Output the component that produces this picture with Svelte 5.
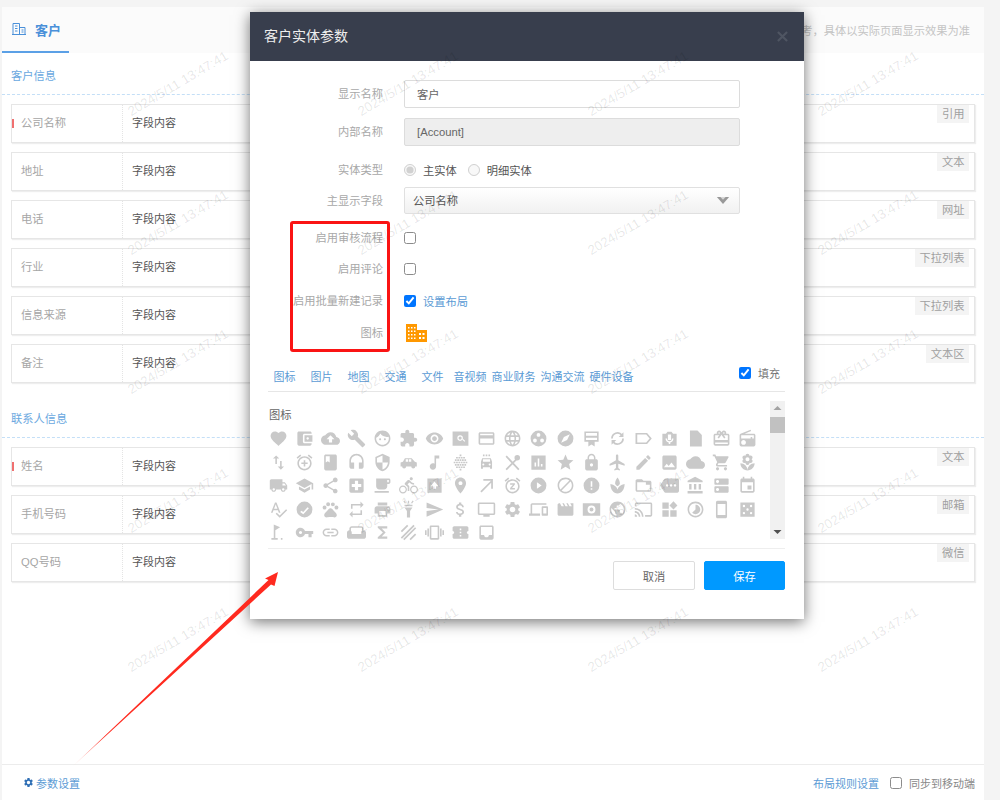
<script>
  const c = (x, y, r) => `M${x - r} ${y}a${r} ${r} 0 1 0 ${2 * r} 0a${r} ${r} 0 1 0 ${-2 * r} 0z`;
  const r = (x, y, w, h) => `M${x} ${y}h${w}v${h}h${-w}z`;

  // staggered dots, widest in the middle row
  const lattice = () => {
    let out = "";
    for (let row = 0; row < 7; row++) {
      const y = 3 + row * 3;
      const odd = row % 2 === 1;
      for (let x = odd ? 4.5 : 3; x <= 21; x += 3) {
        if (Math.abs(x - 12) + Math.abs(y - 12) <= 11) out += r(x - 1.1, y - 1.1, 2.2, 2.2);
      }
    }
    return out;
  };

  const alarm = "M7.88 3.39L6.6 1.86 2 5.71l1.29 1.53 4.59-3.85zM22 5.72l-4.6-3.86-1.29 1.53 4.6 3.86L22 5.72zM12 4c-4.97 0-9 4.03-9 9s4.02 9 9 9c4.97 0 9-4.03 9-9s-4.03-9-9-9zm0 16c-3.87 0-7-3.13-7-7s3.13-7 7-7 7 3.13 7 7-3.13 7-7 7z";
  const gear = "M19.14 12.94c.04-.3.06-.61.06-.94 0-.32-.02-.64-.07-.94l2.03-1.58c.18-.14.23-.41.12-.61l-1.92-3.32c-.12-.22-.37-.29-.59-.22l-2.39.96c-.5-.38-1.03-.7-1.62-.94L14.4 2.81c-.04-.24-.24-.41-.48-.41h-3.84c-.24 0-.43.17-.47.41L9.25 5.35C8.66 5.59 8.12 5.92 7.63 6.29L5.24 5.33c-.22-.08-.47 0-.59.22L2.74 8.87C2.62 9.08 2.66 9.34 2.86 9.48l2.03 1.58C4.84 11.36 4.8 11.69 4.8 12s.02.64.07.94l-2.03 1.58c-.18.14-.23.41-.12.61l1.92 3.32c.12.22.37.29.59.22l2.39-.96c.5.38 1.03.7 1.62.94l.36 2.54c.05.24.24.41.48.41h3.84c.24 0 .44-.17.47-.41l.36-2.54c.59-.24 1.13-.56 1.62-.94l2.39.96c.22.08.47 0 .59-.22l1.92-3.32c.12-.22.07-.47-.12-.61l-2.01-1.58zM12 15.6c-1.98 0-3.6-1.62-3.6-3.6s1.62-3.6 3.6-3.6 3.6 1.62 3.6 3.6-1.62 3.6-3.6 3.6z";
  const cloud = "M19.35 10.04C18.67 6.59 15.64 4 12 4 9.11 4 6.6 5.64 5.35 8.04 2.34 8.36 0 10.91 0 14c0 3.31 2.69 6 6 6h13c2.76 0 5-2.24 5-5 0-2.64-2.05-4.78-4.65-4.96z";

  const icons = [
    // row 1
    { d: "M12 21.35l-1.45-1.32C5.4 15.36 2 12.28 2 8.5 2 5.42 4.42 3 7.5 3c1.74 0 3.41.81 4.5 2.09C13.09 3.81 14.76 3 16.5 3 19.58 3 22 5.42 22 8.5c0 3.78-3.4 6.86-8.55 11.54L12 21.35z" },
    { d: "M21 18v1c0 1.1-.9 2-2 2H5c-1.11 0-2-.9-2-2V5c0-1.1.89-2 2-2h14c1.1 0 2 .9 2 2v1h-9c-1.11 0-2 .9-2 2v8c0 1.1.89 2 2 2h9zm-9-2h10V8H12v8zm4-2.5c-.83 0-1.5-.67-1.5-1.5s.67-1.5 1.5-1.5 1.5.67 1.5 1.5-.67 1.5-1.5 1.5z" },
    { d: cloud + "M14 13v4h-4v-4H7l5-5 5 5h-3z" },
    { d: "M22.7 19l-9.1-9.1c.9-2.3.4-5-1.5-6.9-2-2-5-2.4-7.4-1.3L9 6 6 9 1.6 4.7C.4 7.1.9 10.1 2.9 12.1c1.9 1.9 4.6 2.4 6.9 1.5l9.1 9.1c.4.4 1 .4 1.4 0l2.3-2.3c.5-.4.5-1.1.1-1.4z" },
    { d: "M9 11.75c-.69 0-1.25.56-1.25 1.25s.56 1.25 1.25 1.25 1.25-.56 1.25-1.25-.56-1.25-1.25-1.25zm6 0c-.69 0-1.25.56-1.25 1.25s.56 1.25 1.25 1.25 1.25-.56 1.25-1.25-.56-1.25-1.25-1.25zM12 2C6.48 2 2 6.48 2 12s4.48 10 10 10 10-4.48 10-10S17.52 2 12 2zm0 18c-4.41 0-8-3.59-8-8 0-.29.02-.58.05-.86 2.36-1.05 4.23-2.98 5.21-5.37C11.07 8.33 14.05 10 17.42 10c.78 0 1.53-.09 2.25-.26.21.71.33 1.47.33 2.26 0 4.41-3.59 8-8 8z" },
    { d: "M20.5 11H19V7c0-1.1-.9-2-2-2h-4V3.5C13 2.12 11.88 1 10.5 1S8 2.12 8 3.5V5H4c-1.1 0-1.99.9-1.99 2v3.8H3.5c1.49 0 2.7 1.21 2.7 2.7s-1.21 2.7-2.7 2.7H2V20c0 1.1.9 2 2 2h3.8v-1.5c0-1.49 1.21-2.7 2.7-2.7 1.49 0 2.7 1.21 2.7 2.7V22H17c1.1 0 2-.9 2-2v-4h1.5c1.38 0 2.5-1.12 2.5-2.5S21.88 11 20.5 11z" },
    { d: "M12 4.5C7 4.5 2.73 7.61 1 12c1.73 4.39 6 7.5 11 7.5s9.27-3.11 11-7.5c-1.73-4.39-6-7.5-11-7.5zM12 17c-2.76 0-5-2.24-5-5s2.24-5 5-5 5 2.24 5 5-2.24 5-5 5zm0-8c-1.66 0-3 1.34-3 3s1.34 3 3 3 3-1.34 3-3-1.34-3-3-3z" },
    { d: r(2, 3, 20, 18) + c(11.5, 11.5, 3.5) + c(11.5, 11.5, 2) + "M14 13.2l1-1 3 3-1 1z" },
    { d: "M20 4H4c-1.11 0-1.99.89-1.99 2L2 18c0 1.11.89 2 2 2h16c1.11 0 2-.89 2-2V6c0-1.11-.89-2-2-2zm0 14H4v-6h16v6zm0-10H4V6h16v2z" },
    { d: "M11.99 2C6.47 2 2 6.48 2 12s4.47 10 9.99 10C17.52 22 22 17.52 22 12S17.52 2 11.99 2zm6.93 6h-2.95c-.32-1.25-.78-2.45-1.38-3.56 1.84.63 3.37 1.91 4.33 3.56zM12 4.04c.83 1.2 1.48 2.53 1.91 3.96h-3.82c.43-1.43 1.08-2.76 1.91-3.96zM4.26 14C4.1 13.36 4 12.69 4 12s.1-1.36.26-2h3.38c-.08.66-.14 1.32-.14 2 0 .68.06 1.34.14 2H4.26zm.82 2h2.95c.32 1.25.78 2.45 1.38 3.56-1.84-.63-3.37-1.9-4.33-3.56zm2.95-8H5.08c.96-1.66 2.49-2.93 4.33-3.56C8.81 5.55 8.35 6.75 8.03 8zM12 19.96c-.83-1.2-1.48-2.53-1.91-3.96h3.82c-.43 1.43-1.08 2.76-1.91 3.96zM14.34 14H9.66c-.09-.66-.16-1.32-.16-2 0-.68.07-1.35.16-2h4.68c.09.65.16 1.32.16 2 0 .68-.07 1.34-.16 2zm.25 5.56c.6-1.11 1.06-2.31 1.38-3.56h2.95c-.96 1.65-2.49 2.93-4.33 3.56zM16.36 14c.08-.66.14-1.32.14-2 0-.68-.06-1.34-.14-2h3.38c.16.64.26 1.31.26 2s-.1 1.36-.26 2h-3.38z" },
    { d: c(12, 12, 10) + c(12, 7.5, 2.4) + c(7.5, 14.5, 2.4) + c(16.5, 14.5, 2.4) },
    { d: c(12, 12, 10) + "M6.5 17.5l3.5-7.5 7.5-3.5-3.5 7.5z" },
    { d: "M3 3h18v13h-5v6l-4-2.5L8 22v-6H3z" + r(5, 5, 14, 3.5) + r(5, 11, 14, 3) },
    { s: "M5 12a7 7 0 0 1 12.5-4.3M19 12a7 7 0 0 1-12.5 4.3", d: "M19.5 4v6h-6zM4.5 20v-6h6z" },
    { s: "M3 6h13l5 6-5 6H3z" },
    { d: "M3 6h4.5l2-2.5h5l2 2.5H21v15H3z" + r(10, 7, 4, 7) + "M7 12h1.8c0 2 1.2 3.4 3.2 3.4s3.2-1.4 3.2-3.4H17c0 2.6-1.8 4.6-4 5v2h-2v-2c-2.2-.4-4-2.4-4-5z" },
    { d: "M5 2h9.5L20 7.5V22H5z" },
    { d: "M20 6h-2.18c.11-.31.18-.65.18-1 0-1.66-1.34-3-3-3-1.05 0-1.96.54-2.5 1.35l-.5.67-.5-.68C10.96 2.54 10.05 2 9 2 7.34 2 6 3.34 6 5c0 .35.07.69.18 1H4c-1.11 0-1.99.89-1.99 2L2 19c0 1.11.89 2 2 2h16c1.11 0 2-.89 2-2V8c0-1.11-.89-2-2-2zm-5-2c.55 0 1 .45 1 1s-.45 1-1 1-1-.45-1-1 .45-1 1-1zM9 4c.55 0 1 .45 1 1s-.45 1-1 1-1-.45-1-1 .45-1 1-1zm11 15H4v-2h16v2zm0-5H4V8h5.08L7 10.83 8.62 12 11 8.76l1-1.36 1 1.36L15.38 12 17 10.83 14.92 8H20v6z" },
    { d: "M3.24 6.15C2.51 6.43 2 7.17 2 8v12c0 1.1.89 2 2 2h16c1.11 0 2-.9 2-2V8c0-1.11-.89-2-2-2H8.3l8.26-3.34L15.88 1 3.24 6.15zM7 20c-1.66 0-3-1.34-3-3s1.34-3 3-3 3 1.34 3 3-1.34 3-3 3zm13-8h-2v-2h-2v2H4V8h16v4z" },
    // row 2
    { d: "M9 3L5 6.99h3V14h2V6.99h3L9 3zm7 14.01V10h-2v7.01h-3L15 21l4-3.99h-3z" },
    { d: alarm + "M13 9h-2v3H8v2h3v3h2v-3h3v-2h-3V9z" },
    { d: "M18 2H6c-1.1 0-2 .9-2 2v16c0 1.1.9 2 2 2h12c1.1 0 2-.9 2-2V4c0-1.1-.9-2-2-2zM6 4h5v8l-2.5-1.5L6 12V4z" },
    { d: "M12 1c-4.97 0-9 4.03-9 9v7c0 1.66 1.34 3 3 3h3v-8H5v-2c0-3.87 3.13-7 7-7s7 3.13 7 7v2h-4v8h3c1.66 0 3-1.34 3-3v-7c0-4.97-4.03-9-9-9z" },
    { d: "M12 1L3 5v6c0 5.55 3.84 10.74 9 12 5.16-1.26 9-6.45 9-12V5l-9-4zm0 10.99h7c-.53 4.12-3.28 7.79-7 8.94V12H5V6.3l7-3.11v8.8z" },
    { d: "M2 12l3-1 2.5-4.5h8.5L20 11l2.5 1v5h-2a2.5 2.5 0 0 1-5 0h-6.5a2.5 2.5 0 0 1-5 0H2z" + r(8.5, 8, 3, 3) + r(12.5, 8, 3, 3) },
    { d: "M12 3v10.55c-.59-.34-1.27-.55-2-.55-2.21 0-4 1.79-4 4s1.79 4 4 4 4-1.79 4-4V7h4V3h-6z" },
    { d: lattice() },
    { d: "M5 11l1.5-4.5h11L19 11v9h-2.5v-2h-9v2H5z" + r(7.5, 8, 9, 3) + c(8, 14.5, 1.3) + c(16, 14.5, 1.3) + r(7.5, 2, 2, 2) + r(11, 2, 2, 2) + r(14.5, 2, 2, 2) },
    { s: "M4 4l16 17M20 5 4 21", d: c(18, 6, 3.5) },
    { d: r(3, 3, 18, 18) + r(7, 12, 2, 5) + r(11, 7, 2, 10) + r(15, 14, 2, 3) },
    { d: "M12 17.27L18.18 21l-1.64-7.03L22 9.24l-7.19-.61L12 2 9.19 8.63 2 9.24l5.46 4.73L5.82 21z" },
    { d: "M18 8h-1V6c0-2.76-2.24-5-5-5S7 3.24 7 6v2H6c-1.1 0-2 .9-2 2v10c0 1.1.9 2 2 2h12c1.1 0 2-.9 2-2V10c0-1.1-.9-2-2-2zm-6 9c-1.1 0-2-.9-2-2s.9-2 2-2 2 .9 2 2-.9 2-2 2zm3.1-9H8.9V6c0-1.71 1.39-3.1 3.1-3.1 1.71 0 3.1 1.39 3.1 3.1v2z" },
    { d: "M21 16v-2l-8-5V3.5c0-.83-.67-1.5-1.5-1.5S10 2.67 10 3.5V9l-8 5v2l8-2.5V19l-2 1.5V22l3.5-1 3.5 1v-1.5L13 19v-5.5l8 2.5z" },
    { d: "M3 17.25V21h3.75L17.81 9.94l-3.75-3.75L3 17.25zM20.71 7.04c.39-.39.39-1.02 0-1.41l-2.34-2.34c-.39-.39-1.02-.39-1.41 0l-1.83 1.83 3.75 3.75 1.83-1.83z" },
    { d: "M21 19V5c0-1.1-.9-2-2-2H5c-1.1 0-2 .9-2 2v14c0 1.1.9 2 2 2h14c1.1 0 2-.9 2-2zM8.5 13.5l2.5 3.01L14.5 12l4.5 6H5l3.5-4.5z" },
    { d: cloud },
    { d: "M7 18c-1.1 0-1.99.9-1.99 2S5.9 22 7 22s2-.9 2-2-.9-2-2-2zM1 2v2h2l3.6 7.59-1.35 2.45c-.16.28-.25.61-.25.96 0 1.1.9 2 2 2h12v-2H7.42c-.14 0-.25-.11-.25-.25l.03-.12.9-1.63h7.45c.75 0 1.41-.41 1.75-1.03l3.58-6.49c.08-.14.12-.31.12-.48 0-.55-.45-1-1-1H5.21l-.94-2H1zm16 16c-1.1 0-1.99.9-1.99 2s.89 2 1.99 2 2-.9 2-2-.9-2-2-2z" },
    { d: "M12 22c4.97 0 9-4.03 9-9-4.97 0-9 4.03-9 9zM5.6 10.25c0 1.38 1.12 2.5 2.5 2.5.53 0 1.01-.16 1.42-.44l-.02.19c0 1.38 1.12 2.5 2.5 2.5s2.5-1.12 2.5-2.5l-.02-.19c.4.28.89.44 1.42.44 1.38 0 2.5-1.12 2.5-2.5 0-1-.59-1.85-1.43-2.25.84-.4 1.43-1.25 1.43-2.25 0-1.38-1.12-2.5-2.5-2.5-.53 0-1.01.16-1.42.44l.02-.19C14.5 2.12 13.38 1 12 1S9.5 2.12 9.5 3.5l.02.19c-.4-.28-.89-.44-1.42-.44-1.38 0-2.5 1.12-2.5 2.5 0 1 .59 1.85 1.43 2.25-.84.4-1.43 1.25-1.43 2.25zM12 5.5c1.38 0 2.5 1.12 2.5 2.5s-1.12 2.5-2.5 2.5S9.5 9.38 9.5 8s1.12-2.5 2.5-2.5zM3 13c0 4.97 4.03 9 9 9 0-4.97-4.03-9-9-9z" },
    // row 3
    { d: "M20 8h-3V4H3c-1.1 0-2 .9-2 2v11h2c0 1.66 1.34 3 3 3s3-1.34 3-3h6c0 1.66 1.34 3 3 3s3-1.34 3-3h2v-5l-3-4zM6 18.5c-.83 0-1.5-.67-1.5-1.5s.67-1.5 1.5-1.5 1.5.67 1.5 1.5-.67 1.5-1.5 1.5zm13.5-9l1.96 2.5H17V9.5h2.5zm-1.5 9c-.83 0-1.5-.67-1.5-1.5s.67-1.5 1.5-1.5 1.5.67 1.5 1.5-.67 1.5-1.5 1.5z" },
    { d: "M5 13.18v4L12 21l7-3.82v-4L12 17l-7-3.82zM12 3L1 9l11 6 9-4.91V17h2V9L12 3z" },
    { d: "M18 16.08c-.76 0-1.44.3-1.96.77L8.91 12.7c.05-.23.09-.46.09-.7s-.04-.47-.09-.7l7.05-4.11c.54.5 1.25.81 2.04.81 1.66 0 3-1.34 3-3s-1.34-3-3-3-3 1.34-3 3c0 .24.04.47.09.7L8.04 9.81C7.5 9.31 6.79 9 6 9c-1.66 0-3 1.34-3 3s1.34 3 3 3c.79 0 1.5-.31 2.04-.81l7.12 4.16c-.05.21-.08.43-.08.65 0 1.61 1.31 2.92 2.92 2.92 1.61 0 2.92-1.31 2.92-2.92s-1.31-2.92-2.92-2.92z" },
    { d: "M19 3H5c-1.1 0-1.99.9-1.99 2L3 19c0 1.1.9 2 2 2h14c1.1 0 2-.9 2-2V5c0-1.1-.9-2-2-2zm-1 11h-4v4h-4v-4H6v-4h4V6h4v4h4v4z" },
    { d: "M20 3H4v10c0 2.21 1.79 4 4 4h6c2.21 0 4-1.79 4-4v-3h2c1.11 0 2-.9 2-2V5c0-1.11-.89-2-2-2zm0 5h-2V5h2v3zM2 21h18v-2H2v2z" },
    { d: "M15.5 5.5c1.1 0 2-.9 2-2s-.9-2-2-2-2 .9-2 2 .9 2 2 2zM5 12c-2.8 0-5 2.2-5 5s2.2 5 5 5 5-2.2 5-5-2.2-5-5-5zm0 8.5c-1.9 0-3.5-1.6-3.5-3.5s1.6-3.5 3.5-3.5 3.5 1.6 3.5 3.5-1.6 3.5-3.5 3.5zm5.8-10l2.4-2.4.8.8c1.3 1.3 3 2.1 5.1 2.1V9c-1.5 0-2.7-.6-3.6-1.5l-1.9-1.9c-.5-.4-1-.6-1.6-.6s-1.1.2-1.4.6L7.8 8.4c-.4.4-.6.9-.6 1.4 0 .6.2 1.1.6 1.4L11 14v5h2v-6.2l-2.2-2.3zM19 12c-2.8 0-5 2.2-5 5s2.2 5 5 5 5-2.2 5-5-2.2-5-5-5zm0 8.5c-1.9 0-3.5-1.6-3.5-3.5s1.6-3.5 3.5-3.5 3.5 1.6 3.5 3.5-1.6 3.5-3.5 3.5z" },
    { d: r(3, 3, 18, 18) + "M12 7l5 6h-3v3h-4v-3H7z" },
    { d: "M12 2C8.13 2 5 5.13 5 9c0 5.25 7 13 7 13s7-7.75 7-13c0-3.87-3.13-7-7-7zm0 9.5c-1.38 0-2.5-1.12-2.5-2.5s1.12-2.5 2.5-2.5 2.5 1.12 2.5 2.5-1.12 2.5-2.5 2.5z" },
    { s: "M5 20 19 6M8 5h11v11" },
    { d: alarm + "M9 11h3.63L9 15.2V17h6v-2h-3.63L15 10.8V9H9v2z" },
    { d: c(12, 12, 10) + "M10 8l6 4-6 4z" },
    { d: "M12 2C6.48 2 2 6.48 2 12s4.48 10 10 10 10-4.48 10-10S17.52 2 12 2zM4 12c0-4.42 3.58-8 8-8 1.85 0 3.55.63 4.9 1.69L5.69 16.9C4.63 15.55 4 13.85 4 12zm8 8c-1.85 0-3.55-.63-4.9-1.69L18.31 7.1C19.37 8.45 20 10.15 20 12c0 4.42-3.58 8-8 8z" },
    { d: c(12, 12, 10) + r(11, 6.5, 2, 7) + r(11, 15.5, 2, 2) },
    { d: "M12 2c2 2.5 3 5 3 7.5 0 1-.9 2-3 3.5-2.1-1.5-3-2.5-3-3.5C9 7 10 4.5 12 2zM3 10c5 .7 8 3.5 9 7 1-3.5 4-6.3 9-7 0 7-4 12-9 12S3 17 3 10z" },
    { d: "M20 6h-8l-2-2H4c-1.1 0-1.99.9-1.99 2L2 18c0 1.1.9 2 2 2h16c1.1 0 2-.9 2-2V8c0-1.1-.9-2-2-2zm0 12H4V8h16v10z" + r(15, 8, 5, 3) },
    { d: "M22 3H7c-.69 0-1.23.35-1.59.88L0 12l5.41 8.11c.36.53.9.89 1.59.89h15c1.1 0 2-.9 2-2V5c0-1.1-.9-2-2-2zM9 13.5c-.83 0-1.5-.67-1.5-1.5s.67-1.5 1.5-1.5 1.5.67 1.5 1.5-.67 1.5-1.5 1.5zm5 0c-.83 0-1.5-.67-1.5-1.5s.67-1.5 1.5-1.5 1.5.67 1.5 1.5-.67 1.5-1.5 1.5zm5 0c-.83 0-1.5-.67-1.5-1.5s.67-1.5 1.5-1.5 1.5.67 1.5 1.5-.67 1.5-1.5 1.5z" },
    { d: "M4 10v7h3v-7H4zm6 0v7h3v-7h-3zM2 22h19v-3H2v3zm14-12v7h3v-7h-3zm-4.5-9L2 6v2h19V6l-9.5-5z" },
    { d: "M20 13H4c-.55 0-1 .45-1 1v6c0 .55.45 1 1 1h16c.55 0 1-.45 1-1v-6c0-.55-.45-1-1-1zM7 19c-1.1 0-2-.9-2-2s.9-2 2-2 2 .9 2 2-.9 2-2 2zM20 3H4c-.55 0-1 .45-1 1v6c0 .55.45 1 1 1h16c.55 0 1-.45 1-1V4c0-.55-.45-1-1-1zM7 9c-1.1 0-2-.9-2-2s.9-2 2-2 2 .9 2 2-.9 2-2 2z" },
    { d: "M17 12h-5v5h5v-5zM16 1v2H8V1H6v2H5c-1.11 0-1.99.9-1.99 2L3 19c0 1.1.89 2 2 2h14c1.1 0 2-.9 2-2V5c0-1.1-.9-2-2-2h-1V1h-2zm3 18H5V8h14v11z" },
    // row 4
    { d: "M12.45 16h2.09L9.43 3H7.57L2.46 16h2.09l1.12-3h5.64l1.14 3zm-6.02-5L8.5 5.48 10.57 11H6.43zm15.16.59l-8.09 8.09L9.83 16l-1.41 1.41 5.09 5.09L23 13l-1.41-1.41z" },
    { d: c(12, 12, 10) + "M6.5 15l1.5-1.5 2.5 1.5 5.5-6 1.5 1.5-7 7.5z" },
    { d: c(4.5, 9.5, 2.5) + c(9, 5.5, 2.5) + c(15, 5.5, 2.5) + c(19.5, 9.5, 2.5) + "M17.34 14.86c-.87-1.02-1.6-1.89-2.48-2.91-.46-.54-1.05-1.08-1.75-1.32-.11-.04-.22-.07-.33-.09-.25-.04-.52-.04-.78-.04s-.53 0-.79.05c-.11.02-.22.05-.33.09-.7.24-1.28.78-1.75 1.32-.87 1.02-1.6 1.89-2.48 2.91-1.31 1.31-2.92 2.76-2.62 4.79.29 1.02 1.02 2.03 2.33 2.32.73.15 3.06-.44 5.54-.44h.18c2.48 0 4.81.58 5.54.44 1.31-.29 2.04-1.31 2.33-2.32.31-2.04-1.3-3.49-2.61-4.8z" },
    { d: "M7 7h10v3l4-4-4-4v3H5v6h2V7zm10 10H7v-3l-4 4 4 4v-3h12v-6h-2v4z" },
    { d: "M19 8H5c-1.66 0-3 1.34-3 3v6h4v4h12v-4h4v-6c0-1.66-1.34-3-3-3zm-3 11H8v-5h8v5zm3-7c-.55 0-1-.45-1-1s.45-1 1-1 1 .45 1 1-.45 1-1 1zm-1-9H6v4h12V3z" },
    { d: r(7, 6, 10, 2) + "M7 9.5h10L14 14v8h-4v-8z" + r(11.2, 1, 1.6, 3.5) + "M5.5 1.5l1.3-.8 2 3-1.3.8zM18.5 1.5l-1.3-.8-2 3 1.3.8z" },
    { d: "M2.01 21L23 12 2.01 3 2 10l15 2-15 2z" },
    { d: "M11.8 10.9c-2.27-.59-3-1.2-3-2.15 0-1.09 1.01-1.85 2.7-1.85 1.78 0 2.44.85 2.5 2.1h2.21c-.07-1.72-1.12-3.3-3.21-3.81V3h-3v2.16c-1.94.42-3.5 1.68-3.5 3.61 0 2.31 1.91 3.46 4.7 4.13 2.5.6 3 1.48 3 2.41 0 .69-.49 1.79-2.7 1.79-2.06 0-2.87-.92-2.98-2.1h-2.2c.12 2.19 1.76 3.42 3.68 3.83V21h3v-2.15c1.95-.37 3.5-1.5 3.5-3.55 0-2.84-2.43-3.81-4.7-4.4z" },
    { d: "M21 3H3c-1.1 0-2 .9-2 2v12c0 1.1.9 2 2 2h5v2h8v-2h5c1.1 0 1.99-.9 1.99-2L23 5c0-1.1-.9-2-2-2zm0 14H3V5h18v12z" },
    { d: gear },
    { d: "M4 6h18V4H4c-1.1 0-2 .9-2 2v11H0v3h14v-3H4V6zm19 2h-6c-.55 0-1 .45-1 1v10c0 .55.45 1 1 1h6c.55 0 1-.45 1-1V9c0-.55-.45-1-1-1zm-1 9h-4v-7h4v7z" },
    { d: "M18 4l2 4h-3l-2-4h-2l2 4h-3l-2-4H8l2 4H7L5 4H4c-1.1 0-1.99.9-1.99 2L2 18c0 1.1.9 2 2 2h16c1.1 0 2-.9 2-2V4h-4z" },
    { d: r(1, 4, 22, 16) + c(12, 12, 5) + c(12, 12, 2.5) },
    { d: "M12 2C6.48 2 2 6.48 2 12s4.48 10 10 10 10-4.48 10-10S17.52 2 12 2zm-1 17.93c-3.95-.49-7-3.85-7-7.93 0-.62.08-1.21.21-1.79L9 15v1c0 1.1.9 2 2 2v1.93zm6.9-2.54c-.26-.81-1-1.39-1.9-1.39h-1v-3c0-.55-.45-1-1-1H8v-2h2c.55 0 1-.45 1-1V7h2c1.1 0 2-.9 2-2v-.41c2.93 1.19 5 4.06 5 7.41 0 2.08-.8 3.97-2.1 5.39z" },
    { d: "M21 3H3c-1.1 0-2 .9-2 2v3h2V5h18v14h-7v2h7c1.1 0 2-.9 2-2V5c0-1.1-.9-2-2-2zM1 18v3h3c0-1.66-1.34-3-3-3zm0-4v2c2.76 0 5 2.24 5 5h2c0-3.87-3.13-7-7-7zm0-4v2c4.97 0 9 4.03 9 9h2c0-6.08-4.93-11-11-11z" },
    { d: r(3, 3, 8, 8) + r(3, 13, 8, 8) + r(13, 13, 8, 8) + "M17 1.5l5 5.5-5 5-5-5z" },
    { d: "M16.24 7.76C15.07 6.59 13.54 6 12 6v6l-4.24 4.24c2.34 2.34 6.14 2.34 8.49 0 2.34-2.34 2.34-6.14-.01-8.48zM12 2C6.48 2 2 6.48 2 12s4.48 10 10 10 10-4.48 10-10S17.52 2 12 2zm0 18c-4.42 0-8-3.58-8-8s3.58-8 8-8 8 3.58 8 8-3.58 8-8 8z" },
    { d: "M17 1.01L7 1c-1.1 0-2 .9-2 2v18c0 1.1.9 2 2 2h10c1.1 0 2-.9 2-2V3c0-1.1-.9-1.99-2-1.99zM17 19H7V5h10v14z" },
    { d: r(3, 3, 18, 18) + c(7.5, 7.5, 1.5) + c(16.5, 7.5, 1.5) + c(12, 12, 1.5) + c(7.5, 16.5, 1.5) + c(16.5, 16.5, 1.5) },
    // row 5
    { d: "M6 2l8 3.5L8 9v10h3v2H3v-2h3z" + r(15, 19, 2, 2) },
    { d: "M12.65 10C11.83 7.67 9.61 6 7 6c-3.31 0-6 2.69-6 6s2.69 6 6 6c2.61 0 4.83-1.67 5.65-4H17v4h4v-4h2v-4H12.65zM7 14c-1.1 0-2-.9-2-2s.9-2 2-2 2 .9 2 2-.9 2-2 2z" },
    { d: "M3.9 12c0-1.71 1.39-3.1 3.1-3.1h4V7H7c-2.76 0-5 2.24-5 5s2.24 5 5 5h4v-1.9H7c-1.71 0-3.1-1.39-3.1-3.1zM8 13h8v-2H8v2zm9-6h-4v1.9h4c1.71 0 3.1 1.39 3.1 3.1s-1.39 3.1-3.1 3.1h-4V17h4c2.76 0 5-2.24 5-5s-2.24-5-5-5z" },
    { d: "M21 9V7c0-1.65-1.35-3-3-3H6C4.35 4 3 5.35 3 7v2c-1.65 0-3 1.35-3 3v5c0 1.65 1.35 3 3 3h18c1.65 0 3-1.35 3-3v-5c0-1.65-1.35-3-3-3zM5 7c0-.55.45-1 1-1h12c.55 0 1 .45 1 1v2.78c-.61.55-1 1.34-1 2.22v2H6v-2c0-.88-.39-1.67-1-2.22V7z" },
    { d: "M18 4H6v2l6.5 6L6 18v2h12v-3h-7l5-5-5-5h7z" },
    { s: "M3 11l8-8M3 19 19 3M6 21 21 6M14 21l7-7" },
    { d: "M0 15h2V9H0v6zm3 2h2V7H3v10zm19-8v6h2V9h-2zm-3 8h2V7h-2v10zM16.5 3h-9C6.67 3 6 3.67 6 4.5v15c0 .83.67 1.5 1.5 1.5h9c.83 0 1.5-.67 1.5-1.5v-15c0-.83-.67-1.5-1.5-1.5zM16 19H8V5h8v14z" },
    { d: "M22 10V6c0-1.1-.9-2-2-2H4c-1.1 0-1.99.9-1.99 2v4c1.1 0 1.99.9 1.99 2s-.89 2-2 2v4c0 1.1.9 2 2 2h16c1.1 0 2-.9 2-2v-4c-1.1 0-2-.9-2-2s.9-2 2-2z" + r(11, 7, 2, 2) + r(11, 11, 2, 2) + r(11, 15, 2, 2) },
    { d: "M19 3H4.99c-1.11 0-1.98.89-1.98 2L3 19c0 1.1.88 2 1.99 2H19c1.1 0 2-.9 2-2V5c0-1.11-.9-2-2-2zm0 12h-4c0 1.66-1.35 3-3 3s-3-1.34-3-3H4.99V5H19v10z" },
  ];

  const account = [
    { label: "公司名称", tag: "引用", req: true },
    { label: "地址", tag: "文本" },
    { label: "电话", tag: "网址" },
    { label: "行业", tag: "下拉列表" },
    { label: "信息来源", tag: "下拉列表" },
    { label: "备注", tag: "文本区" },
  ];
  const contact = [
    { label: "姓名", tag: "文本", req: true },
    { label: "手机号码", tag: "邮箱" },
    { label: "QQ号码", tag: "微信" },
  ];
  const sets = ["图标", "图片", "地图", "交通", "文件", "音视频", "商业财务", "沟通交流", "硬件设备"];
  const marks = Array.from({ length: 20 });
</script>

{#snippet rows(list)}
  <div class="rows">
    {#each list as f}
      <div class="row">
        {#if f.req}<i class="req"></i>{/if}
        <div class="cell-label">{f.label}</div>
        <div class="cell-value">字段内容</div>
        <span class="tag">{f.tag}</span>
      </div>
    {/each}
  </div>
{/snippet}

<div class="page">
  <div class="main">
    <div class="tabbar">
      <div class="tab">
        <svg width="14" height="12" viewBox="0 0 14 12" fill="none" stroke="#4a90d9">
          <path d="M1 .5h6.5v11H1zM7.5 4.5h5.5v7H7.5zM0 11.5h14M3 3h2.5M3 5.5h2.5M3 8h2.5M9.5 7h2M9.5 9h2" />
        </svg>
        <span>客户</span>
      </div>
      <div class="hint">此页面布局仅供参考，具体以实际页面显示效果为准</div>
    </div>

    <div class="section-head">客户信息</div>
    {@render rows(account)}
    <div class="section-head">联系人信息</div>
    {@render rows(contact)}

    <div class="footer">
      <a class="link settings" href="#top">
        <svg width="11" height="11" viewBox="0 0 24 24" fill="#2f6fb5"><path d={gear} /></svg>
        参数设置
      </a>
      <div class="footer-right">
        <a class="link" href="#top">布局规则设置</a>
        <label class="check"><input type="checkbox" /> 同步到移动端</label>
      </div>
    </div>
  </div>

  <div class="modal">
    <div class="modal-head">
      <h3>客户实体参数</h3>
      <svg class="close" width="11" height="11" viewBox="0 0 12 12" stroke="#4f5562" stroke-width="2.4">
        <path d="M1 1l10 10M11 1 1 11" />
      </svg>
    </div>
    <div class="modal-body">
      <div class="frow mb10">
        <div class="flabel">显示名称</div>
        <div class="input">客户</div>
      </div>
      <div class="frow mb10">
        <div class="flabel">内部名称</div>
        <div class="input disabled">[Account]</div>
      </div>
      <div class="frow mb3">
        <div class="flabel">实体类型</div>
        <div class="radios">
          <label><input type="radio" name="kind" checked disabled /> 主实体</label>
          <label><input type="radio" name="kind" disabled /> 明细实体</label>
        </div>
      </div>
      <div class="frow mb10 short">
        <div class="flabel">主显示字段</div>
        <div class="select">
          公司名称
          <svg width="14" height="7" viewBox="0 0 14 8" fill="#999"><path d="M0 0h14L7 8z" /><path d="M4 0h6L7 3z" fill="#d8d8d8" /></svg>
        </div>
      </div>
      <div class="frow mb3">
        <div class="flabel">启用审核流程</div>
        <div><input type="checkbox" /></div>
      </div>
      <div class="frow mb4">
        <div class="flabel">启用评论</div>
        <div><input type="checkbox" /></div>
      </div>
      <div class="frow mb4">
        <div class="flabel">启用批量新建记录</div>
        <div class="inline">
          <input type="checkbox" checked />
          <a class="link" href="#top">设置布局</a>
        </div>
      </div>
      <div class="frow">
        <div class="flabel">图标</div>
        <svg class="building" width="21" height="18" viewBox="0 0 21 18">
          <path fill="#ff9800" d="M0 0h11v6h10v12H0z" />
          <path fill="#fff" d="M2 3h1.5v1.5H2zM5 3h1.5v1.5H5zM8 3h1.5v1.5H8zM2 6.5h1.5V8H2zM5 6.5h1.5V8H5zM8 6.5h1.5V8H8zM2 10h1.5v1.5H2zM5 10h1.5v1.5H5zM8 10h1.5v1.5H8zM2 13.5h1.5V15H2zM5 13.5h1.5V15H5zM8 13.5h1.5V15H8zM13 9h2v2h-2zM16.5 9h2v2h-2zM13 13h2v2h-2zM16.5 13h2v2h-2z" />
        </svg>
      </div>

      <div class="sets">
        {#each sets as s}
          <a class="set" href="#top">{s}</a>
        {/each}
        <label class="fill"><input type="checkbox" checked /> 填充</label>
      </div>

      <div class="panel">
        <div class="panel-list">
          <div class="panel-title">图标</div>
          <div class="icons">
            {#each icons as ic}
              <svg class="ic" viewBox="0 0 24 24" width="19" height="19">
                {#if ic.d}<path d={ic.d} fill="#c9c9c9" fill-rule="evenodd" />{/if}
                {#if ic.s}<path d={ic.s} fill="none" stroke="#c9c9c9" stroke-width="2.2" />{/if}
              </svg>
            {/each}
          </div>
        </div>
        <div class="scrollbar">
          <svg width="15" height="15" viewBox="0 0 15 15" fill="#a3a3a3"><path d="M7.5 5l4 4h-8z" /></svg>
          <div class="thumb"></div>
          <svg class="down" width="15" height="15" viewBox="0 0 15 15" fill="#505050"><path d="M7.5 10l-4-4h8z" /></svg>
        </div>
      </div>

      <div class="actions">
        <button class="btn">取消</button>
        <button class="btn primary">保存</button>
      </div>
    </div>
  </div>

  <div class="watermark">
    {#each marks as _}
      <span>2024/5/11 13:47:41</span>
    {/each}
  </div>

  <div class="redbox"></div>
  <svg class="arrow" width="1000" height="800" viewBox="0 0 1000 800">
    <defs>
      <linearGradient id="fade" gradientUnits="userSpaceOnUse" x1="72" y1="767" x2="278" y2="572">
        <stop offset="0" stop-color="#ff2a1f" stop-opacity="0.05" />
        <stop offset="0.16" stop-color="#ff2a1f" />
      </linearGradient>
    </defs>
    <path fill="url(#fade)" d="M278 572l-13 6.5 3.5 1.500L72 767l199-182.500 3.500 1.500z" />
  </svg>
</div>

<style>
  :global(body) {
    margin: 0;
    background: #f4f4f4;
  }
  .page {
    position: relative;
    width: 1000px;
    height: 800px;
    box-sizing: border-box;
    padding: 7px 16px 0 2px;
    overflow: hidden;
    font-family: "Liberation Sans", "Noto Sans CJK SC", sans-serif;
    font-size: 11.25px;
    color: #999;
  }
  .main {
    display: flex;
    flex-direction: column;
    height: 793px;
    background: #fff;
  }
  .tabbar {
    display: flex;
    justify-content: space-between;
    align-items: stretch;
    height: 46px;
    flex: none;
    background: #fbfbfb;
  }
  .tab {
    display: flex;
    align-items: center;
    gap: 9px;
    width: 67px;
    box-sizing: border-box;
    padding: 0 0 0 10px;
    border-bottom: 2px solid #5ba0e6;
    color: #4a90d9;
    font-size: 13px;
    font-weight: 700;
  }
  .hint {
    align-self: center;
    margin: 0 14px 0 0;
    color: #c4c4c4;
  }
  .section-head {
    flex: none;
    box-sizing: border-box;
    height: 42px;
    padding: 14px 0 0 9px;
    border-bottom: 1px dashed #c4dff7;
    color: #6aa8e0;
  }
  .rows {
    padding: 9px 9px 4px;
    flex: none;
  }
  .row {
    position: relative;
    display: flex;
    box-sizing: border-box;
    height: 39px;
    margin-bottom: 9px;
    border: 1px solid #e6e6e6;
    box-shadow: 1px 1px 1px #eee;
    line-height: 37px;
  }
  .req {
    position: absolute;
    left: 0;
    top: 14px;
    width: 2px;
    height: 9px;
    background: #f07070;
  }
  .cell-label {
    width: 111px;
    box-sizing: border-box;
    padding-left: 9px;
    border-right: 1px dotted #e4e4e4;
    color: #a6a6a6;
  }
  .cell-value {
    padding-left: 9px;
    font-size: 11px;
    color: #555;
  }
  .tag {
    position: absolute;
    top: 0;
    right: 5px;
    height: 18px;
    padding: 0 4.5px;
    background: #f4f4f4;
    line-height: 18px;
    color: #a0a0a0;
  }
  .footer {
    margin-top: auto;
    display: flex;
    justify-content: space-between;
    align-items: center;
    box-sizing: border-box;
    height: 36px;
    padding: 0 9px 0 21px;
    border-top: 1px solid #ececec;
    font-size: 11px;
  }
  .link {
    color: #5b9bd5;
    text-decoration: none;
  }
  .settings {
    display: flex;
    align-items: center;
    gap: 2px;
  }
  .footer-right {
    display: flex;
    align-items: center;
    gap: 11px;
  }
  .check,
  .fill {
    display: flex;
    align-items: center;
    gap: 7px;
    color: #888;
  }
  input[type="checkbox"],
  input[type="radio"] {
    width: 12px;
    height: 12px;
    margin: 0;
    accent-color: #0075ff;
  }
  input[type="checkbox"]:not(:checked) {
    appearance: none;
    box-sizing: border-box;
    border: 1px solid #8c8c8c;
    border-radius: 2.5px;
    background: #fff;
  }

  .modal {
    position: absolute;
    left: 250px;
    top: 12px;
    width: 554px;
    height: 607px;
    background: #fff;
    box-shadow: 0 3px 14px rgba(0, 0, 0, 0.55);
  }
  .modal-head {
    display: flex;
    justify-content: space-between;
    align-items: center;
    box-sizing: border-box;
    height: 49px;
    padding: 0 16px 0 14px;
    background: #383e4d;
  }
  .modal-head h3 {
    margin: 0 0 3px;
    font-size: 14px;
    font-weight: 400;
    color: #eee;
  }
  .close {
    margin-bottom: 1px;
  }
  .modal-body {
    padding: 19px 19px 0 18px;
  }
  .frow {
    display: grid;
    grid-template-columns: 115px 336px;
    column-gap: 21px;
    align-items: center;
    height: 28px;
  }
  .short {
    height: 27px;
  }
  .mb3 { margin-bottom: 3px; }
  .mb4 { margin-bottom: 4px; }
  .mb10 { margin-bottom: 10px; }
  .flabel {
    padding-bottom: 2px;
    text-align: right;
    white-space: nowrap;
    color: #a8a8a8;
  }
  .frow > div:last-child {
    display: flex;
    align-items: center;
  }
  .input {
    height: 28px;
    box-sizing: border-box;
    padding: 0 12px 1px;
    border: 1px solid #dcdcdc;
    border-radius: 2px;
    color: #666;
  }
  .input.disabled {
    background: #eee;
  }
  .radios {
    gap: 11px;
    color: #555;
  }
  .radios label {
    display: flex;
    align-items: center;
    gap: 7px;
  }
  .select {
    justify-content: space-between;
    height: 27px;
    box-sizing: border-box;
    padding: 0 9px 1px 8px;
    border: 1px solid #e0e0e0;
    border-radius: 2px;
    background: linear-gradient(#fff, #f1f1f1);
    color: #555;
  }
  .inline {
    gap: 7px;
  }
  .inline .link {
    padding-bottom: 1px;
  }
  .building {
    margin-left: 2px;
  }
  .sets {
    display: flex;
    align-items: center;
    height: 30px;
    margin-top: 14px;
    border-bottom: 1px solid #e6e6e6;
    font-size: 11px;
  }
  .set {
    min-width: 37px;
    box-sizing: border-box;
    padding: 0 2.5px;
    text-align: center;
    color: #5b9bd5;
    text-decoration: none;
    white-space: nowrap;
  }
  .set:first-child {
    margin-left: -2px;
  }
  .fill {
    margin: -6px 5px 0 auto;
    color: #777;
  }
  .panel {
    display: flex;
    justify-content: space-between;
    height: 157px;
    box-sizing: border-box;
    padding-top: 9px;
    border-bottom: 1px solid #eee;
  }
  .panel-title {
    height: 26px;
    padding-left: 1px;
    line-height: 28px;
    color: #666;
  }
  .icons {
    display: grid;
    grid-template-columns: repeat(19, 26.1px);
    grid-auto-rows: 23.5px;
    margin-left: -3px;
    justify-items: center;
    align-items: center;
  }
  .scrollbar {
    position: relative;
    flex: none;
    width: 15px;
    height: 138px;
    background: #f1f1f1;
  }
  .scrollbar svg {
    display: block;
  }
  .thumb {
    height: 16px;
    margin-top: 1px;
    background: #c1c1c1;
  }
  .down {
    position: absolute;
    left: 0;
    bottom: 0;
  }
  .actions {
    display: flex;
    justify-content: flex-end;
    gap: 9px;
    padding-top: 12px;
  }
  .btn {
    width: 82px;
    height: 29px;
    border: 1px solid #ddd;
    border-radius: 2px;
    background: #fff;
    font: inherit;
    color: #666;
  }
  .btn.primary {
    width: 81px;
    border-color: #0099ff;
    background: #0099ff;
    color: #fff;
  }

  .watermark {
    position: absolute;
    inset: 0;
    display: grid;
    grid-template-columns: repeat(4, 230px);
    grid-auto-rows: 139px;
    padding: 14px 0 0 63px;
    pointer-events: none;
  }
  .watermark span {
    place-self: center;
    transform: rotate(-30.5deg);
    font-size: 13.3px;
    white-space: nowrap;
    color: rgba(0, 0, 0, 0.1);
  }
  .redbox {
    position: absolute;
    left: 290px;
    top: 221px;
    width: 94px;
    height: 125px;
    border: 3px solid #fa1414;
    border-radius: 3px;
  }
  .arrow {
    position: absolute;
    left: 0;
    top: 0;
    pointer-events: none;
  }
</style>
